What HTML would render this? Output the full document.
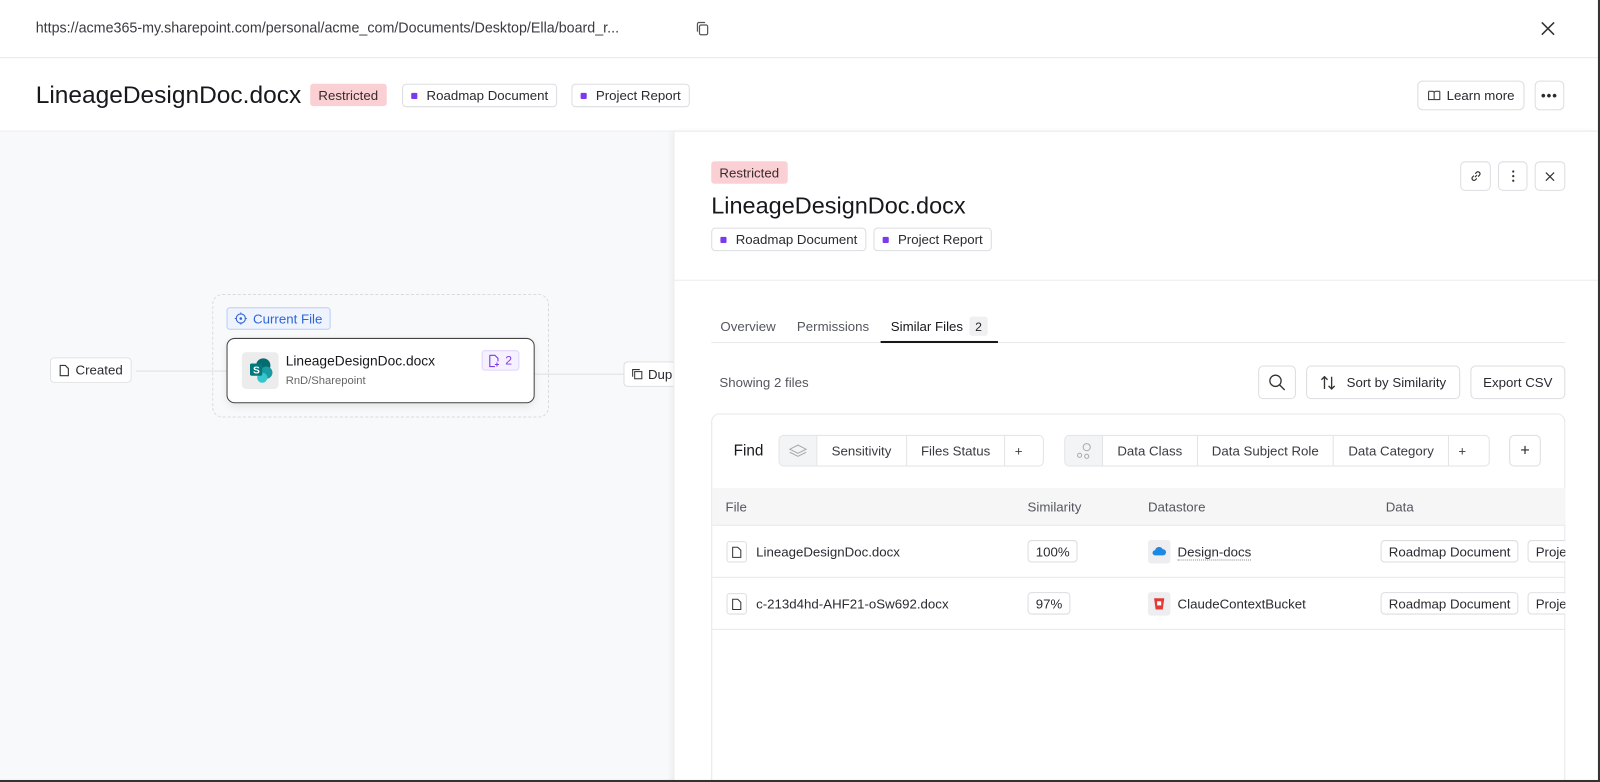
<!DOCTYPE html>
<html><head><meta charset="utf-8"><style>
*{box-sizing:border-box;margin:0;padding:0}
html,body{width:1600px;height:782px;overflow:hidden;background:#fff}
body{font-family:"Liberation Sans",sans-serif;color:#1f2024;position:relative}
#w{position:absolute;left:0;top:0;width:1568px;height:766px;overflow:hidden;transform:scale(1.0204,1.0209);transform-origin:0 0}
.abs{position:absolute}
.tag{position:absolute;height:23px;border:1px solid #dcdde0;border-radius:4px;font-size:13px;display:flex;align-items:center;padding:0 8px;background:#fff;color:#2a2b30}
.dot{width:6px;height:6px;background:#7c3aed;border-radius:1px;margin-right:9px}
.restr{position:absolute;background:#fbd0d4;border-radius:3px;font-size:13px;color:#3a2a2c;padding:0 8px;height:22px;display:flex;align-items:center}
.btn{position:absolute;border:1px solid #dcdde0;border-radius:5px;background:#fff;display:flex;align-items:center;justify-content:center;font-size:13px;color:#2a2b30}
.grp{position:absolute;top:426px;height:31px;border:1px solid #e2e3e6;border-radius:5px;display:flex;font-size:13px;color:#3a3b40;overflow:hidden}
.grp div{display:flex;align-items:center;padding:0 14px;border-left:1px solid #e2e3e6;background:#fff}
.grp div.ic{border-left:none;background:#f3f4f5;padding:0 9px}
.cell{position:absolute;font-size:13px;color:#2a2b30}
.box{position:absolute;border:1px solid #dcdde0;border-radius:4px;height:22px;font-size:13px;display:flex;align-items:center;padding:0 7px;background:#fff;color:#2a2b30}
</style></head><body><div id="w">
<div class="abs" style="left:35px;top:19px;font-size:14px;color:#3a3b40">https://acme365-my.sharepoint.com/personal/acme_com/Documents/Desktop/Ella/board_r...</div>
<svg class="abs" style="left:682px;top:21px" width="13" height="14" viewBox="0 0 13 14"><rect x="3.5" y="3.5" width="8" height="9.5" rx="1.5" fill="none" stroke="#555" stroke-width="1.2"/><path d="M1.5 10V2.5a1.5 1.5 0 0 1 1.5-1.5h6" fill="none" stroke="#555" stroke-width="1.2"/></svg>
<svg class="abs" style="left:1510px;top:21px" width="14" height="14"><path d="M1 1L13 13M13 1L1 13" stroke="#333" stroke-width="1.5"/></svg>
<div class="abs" style="left:0;top:56px;width:1566px;height:1px;background:#e8e9eb"></div>
<div class="abs" style="left:35px;top:80px;font-size:24px;color:#17181c">LineageDesignDoc.docx</div>
<div class="restr" style="left:304px;top:82px">Restricted</div>
<div class="tag" style="left:394px;top:82px"><span class="dot"></span>Roadmap Document</div>
<div class="tag" style="left:560px;top:82px"><span class="dot"></span>Project Report</div>
<div class="btn" style="left:1389px;top:79px;width:105px;height:29px"><svg width="13" height="11" style="margin-right:6px"><path d="M1 1.5h4a1.5 1.5 0 0 1 1.5 1.5v7M12 1.5H8A1.5 1.5 0 0 0 6.5 3v7M1 1.5v8h11v-8" fill="none" stroke="#444" stroke-width="1.1"/></svg>Learn more</div>
<div class="btn" style="left:1504px;top:79px;width:29px;height:29px;font-weight:bold;letter-spacing:1px">•••</div>
<div class="abs" style="left:0;top:128px;width:1566px;height:1px;background:#ececee"></div>
<div class="abs" style="left:0;top:129px;width:660px;height:653px;background:#f8f9fa"></div>
<div class="abs" style="left:133px;top:363px;width:90px;height:1px;background:#dfe0e2"></div>
<div class="abs" style="left:523px;top:366px;width:90px;height:1px;background:#dfe0e2"></div>
<div class="abs" style="left:208px;top:288px;width:330px;height:121px;border:1px dashed #d8dbe2;border-radius:10px"></div>
<div class="tag" style="left:49px;top:350px;height:25px;border-color:#e2e3e6"><svg width="10" height="12" style="margin-right:6px"><path d="M1 1h5l3 3v7H1z" fill="none" stroke="#333" stroke-width="1.1"/></svg>Created</div>
<div class="tag" style="left:611px;top:354px;height:25px;border-right:none;border-radius:4px 0 0 4px;width:49px;overflow:hidden;padding:0 0 0 7px"><svg width="11" height="11" style="margin-right:5px;flex:none"><rect x="3" y="3" width="7" height="7" fill="none" stroke="#333"/><path d="M1 8V1h7" fill="none" stroke="#333"/></svg>Dup</div>
<div class="abs" style="left:222px;top:301px;height:22px;border:1px solid #b8cdf5;background:#eef3fe;border-radius:3px;color:#2f66d6;font-size:13px;display:flex;align-items:center;padding:0 7px"><svg width="12" height="12" style="margin-right:6px"><circle cx="6" cy="6" r="4.5" fill="none" stroke="#2f66d6" stroke-width="1.1"/><circle cx="6" cy="6" r="1.3" fill="#2f66d6"/><path d="M6 0v2M6 10v2M0 6h2M10 6h2" stroke="#2f66d6"/></svg>Current File</div>
<div class="abs" style="left:222px;top:331px;width:302px;height:64px;border:1px solid #444;border-radius:8px;background:#fff;box-shadow:0 3px 8px rgba(0,0,0,.08)"></div>
<div class="abs" style="left:237px;top:345px;width:36px;height:36px;background:#ececec;border-radius:4px"></div>
<svg class="abs" style="left:243px;top:349px" width="26" height="26"><circle cx="15" cy="9" r="7" fill="#036c70"/><circle cx="18" cy="16" r="6" fill="#1a9ba1"/><circle cx="14" cy="21" r="5" fill="#37c6d0"/><rect x="2" y="7" width="12" height="12" rx="1.5" fill="#03787c"/><text x="5" y="17" font-size="10" fill="#fff" font-family="Liberation Sans" font-weight="bold">S</text></svg>
<div class="abs" style="left:280px;top:346px;font-size:13.5px;color:#17181c">LineageDesignDoc.docx</div>
<div class="abs" style="left:280px;top:367px;font-size:11px;color:#666">RnD/Sharepoint</div>
<div class="abs" style="left:472px;top:343px;width:37px;height:20px;border:1px solid #e0d4fb;background:#f6f1ff;border-radius:3px;color:#7c3aed;font-size:12px;display:flex;align-items:center;justify-content:center"><svg width="11" height="13" style="margin-right:5px"><path d="M1 1h5l3 3v3M1 1v11h5" fill="none" stroke="#7c3aed" stroke-width="1.1"/><path d="M8 8v4M6 10h4" stroke="#7c3aed"/></svg>2</div>
<div class="abs" style="left:660px;top:129px;width:906px;height:653px;background:#fff;box-shadow:-2px 0 6px rgba(0,0,0,.05);border-left:1px solid #ececee"></div>
<div class="restr" style="left:697px;top:158px">Restricted</div>
<div class="btn" style="left:1431px;top:158px;width:30px;height:29px"><svg width="13" height="13"><path d="M5.5 7.5l2-2M4.5 6L3 7.5a2 2 0 0 0 2.8 2.8L7.3 8.8M8.5 7L10 5.5a2 2 0 0 0-2.8-2.8L5.7 4.2" fill="none" stroke="#333" stroke-width="1.1"/></svg></div>
<div class="btn" style="left:1468px;top:158px;width:29px;height:29px"><svg width="4" height="13"><circle cx="2" cy="2" r="1.1" fill="#333"/><circle cx="2" cy="6.5" r="1.1" fill="#333"/><circle cx="2" cy="11" r="1.1" fill="#333"/></svg></div>
<div class="btn" style="left:1504px;top:158px;width:30px;height:29px"><svg width="10" height="10"><path d="M1 1l8 8M9 1L1 9" stroke="#333" stroke-width="1.2"/></svg></div>
<div class="abs" style="left:697px;top:188px;font-size:23px;color:#17181c">LineageDesignDoc.docx</div>
<div class="tag" style="left:697px;top:223px"><span class="dot"></span>Roadmap Document</div>
<div class="tag" style="left:856px;top:223px"><span class="dot"></span>Project Report</div>
<div class="abs" style="left:661px;top:274px;width:905px;height:1px;background:#ececee"></div>
<div class="abs" style="left:706px;top:312px;font-size:13px;color:#55575e">Overview</div>
<div class="abs" style="left:781px;top:312px;font-size:13px;color:#55575e">Permissions</div>
<div class="abs" style="left:873px;top:312px;font-size:13px;color:#17181c">Similar Files</div>
<div class="abs" style="left:950px;top:310px;width:18px;height:19px;background:#f0f0f2;border-radius:3px;font-size:12px;display:flex;align-items:center;justify-content:center">2</div>
<div class="abs" style="left:697px;top:335px;width:837px;height:1px;background:#e8e9eb"></div>
<div class="abs" style="left:863px;top:334px;width:115px;height:2px;background:#17181c"></div>
<div class="abs" style="left:705px;top:367px;font-size:13px;color:#55575e">Showing 2 files</div>
<div class="btn" style="left:1233px;top:358px;width:37px;height:33px"><svg width="17" height="17"><circle cx="7" cy="7" r="5.5" fill="none" stroke="#333" stroke-width="1.3"/><path d="M11 11l5 5" stroke="#333" stroke-width="1.3"/></svg></div>
<div class="btn" style="left:1280px;top:358px;width:151px;height:33px"><svg width="16" height="14" style="margin-right:10px"><path d="M4 13V1M1 4l3-3 3 3M11 1v12M8 10l3 3 3-3" fill="none" stroke="#333" stroke-width="1.3"/></svg>Sort by Similarity</div>
<div class="btn" style="left:1441px;top:358px;width:93px;height:33px">Export CSV</div>
<div class="abs" style="left:697px;top:405px;width:837px;height:380px;border:1px solid #e6e7e9;border-radius:8px"></div>
<div class="abs" style="left:719px;top:433px;font-size:15px;color:#17181c">Find</div>
<div class="grp" style="left:763px;width:260px"><div class="ic"><svg width="18" height="14"><path d="M9 1l8 4-8 4-8-4z" fill="none" stroke="#aaa"/><path d="M1 8l8 4 8-4" fill="none" stroke="#aaa"/></svg></div><div>Sensitivity</div><div>Files Status</div><div style="padding:0 9px">+</div></div>
<div class="grp" style="left:1043px;width:417px"><div class="ic"><svg width="18" height="18"><circle cx="12" cy="5" r="3.5" fill="none" stroke="#aaa"/><circle cx="5" cy="13" r="2" fill="none" stroke="#aaa"/><circle cx="12" cy="14" r="2" fill="none" stroke="#aaa"/></svg></div><div>Data Class</div><div>Data Subject Role</div><div>Data Category</div><div style="padding:0 9px">+</div></div>
<div class="btn" style="left:1479px;top:426px;width:31px;height:31px;font-size:16px">+</div>
<div class="abs" style="left:698px;top:478px;width:836px;height:37px;background:#f6f6f7;border-bottom:1px solid #e8e9eb"></div>
<div class="cell" style="left:711px;top:489px;color:#55575e">File</div>
<div class="cell" style="left:1007px;top:489px;color:#55575e">Similarity</div>
<div class="cell" style="left:1125px;top:489px;color:#55575e">Datastore</div>
<div class="cell" style="left:1358px;top:489px;color:#55575e">Data</div>
<div class="abs" style="left:698px;top:565px;width:836px;height:1px;background:#e8e9eb"></div>
<div class="abs" style="left:698px;top:616px;width:836px;height:1px;background:#e8e9eb"></div>
<div class="abs" style="left:712px;top:530px;width:20px;height:21px;border:1px solid #dcdde0;border-radius:3px"></div>
<svg class="abs" style="left:717px;top:535px" width="10" height="12"><path d="M1 1h5l3 3v7H1z" fill="none" stroke="#333"/></svg>
<div class="cell" style="left:741px;top:533px">LineageDesignDoc.docx</div>
<div class="box" style="left:1007px;top:529px">100%</div>
<div class="abs" style="left:1125px;top:529px;width:22px;height:23px;background:#eeeef0;border-radius:3px"></div>
<svg class="abs" style="left:1129px;top:535px" width="14" height="10"><path d="M3 9a2.5 2.5 0 0 1 0-5 4 4 0 0 1 7.5-1A3 3 0 0 1 11 9z" fill="#1e88e5"/></svg>
<div class="cell" style="left:1154px;top:533px;border-bottom:1px dotted #888">Design-docs</div>
<div class="box" style="left:1353px;top:529px">Roadmap Document</div>
<div class="box" style="left:1497px;top:529px;border-right:none;border-radius:4px 0 0 4px;width:37px;overflow:hidden">Proje</div>
<div class="abs" style="left:712px;top:581px;width:20px;height:21px;border:1px solid #dcdde0;border-radius:3px"></div>
<svg class="abs" style="left:717px;top:586px" width="10" height="12"><path d="M1 1h5l3 3v7H1z" fill="none" stroke="#333"/></svg>
<div class="cell" style="left:741px;top:584px">c-213d4hd-AHF21-oSw692.docx</div>
<div class="box" style="left:1007px;top:580px">97%</div>
<div class="abs" style="left:1125px;top:580px;width:22px;height:23px;background:#eeeef0;border-radius:3px"></div>
<svg class="abs" style="left:1130px;top:584px" width="12" height="14"><path d="M1 2h10l-1.5 11h-7z" fill="#e53935"/><rect x="4" y="5" width="4" height="4" fill="#fff"/></svg>
<div class="cell" style="left:1154px;top:584px">ClaudeContextBucket</div>
<div class="box" style="left:1353px;top:580px">Roadmap Document</div>
<div class="box" style="left:1497px;top:580px;border-right:none;border-radius:4px 0 0 4px;width:37px;overflow:hidden">Proje</div>
<div class="abs" style="left:1566px;top:0;width:2px;height:766px;background:#333"></div>
<div class="abs" style="left:0;top:764px;width:1568px;height:2px;background:#333"></div>
</div></body></html>
